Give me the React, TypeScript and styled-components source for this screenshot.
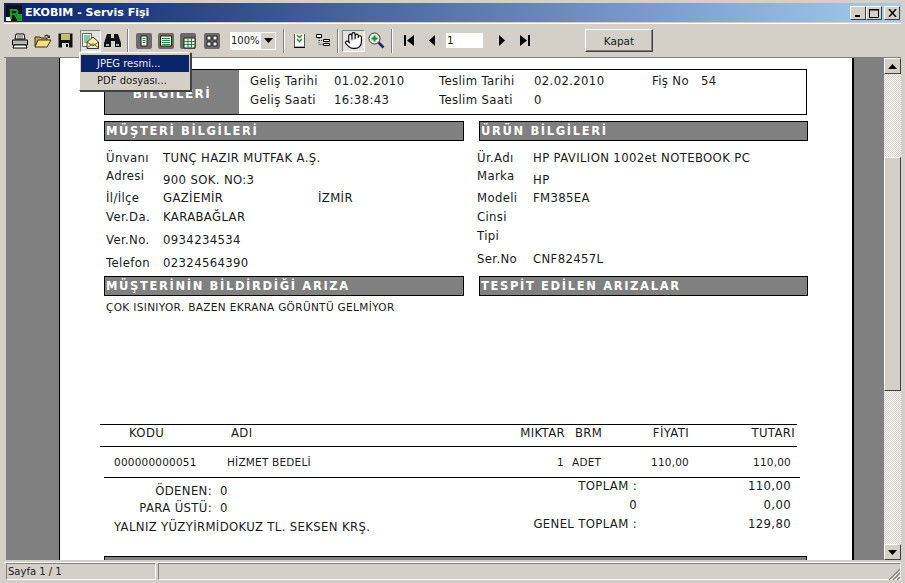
import styled, { createGlobalStyle } from "styled-components";
import { Hand } from "lucide-react";

const Global = createGlobalStyle`
  html, body {
    margin: 0;
    padding: 0;
    overflow: hidden;
  }
  body {
    font-family: "DejaVu Sans", "Liberation Sans", sans-serif;
    color: #1a1a1a;
  }
`;

const Window = styled.div`
  width: 905px;
  height: 583px;
  box-sizing: border-box;
  padding: 3px 4px 2px 4px;
  background: #d4d0c8;
  display: flex;
  flex-direction: column;
  position: relative;
  overflow: hidden;
`;

const TitleBar = styled.div`
  height: 19px;
  flex: none;
  display: flex;
  align-items: center;
  background: linear-gradient(90deg, #0a246a 0%, #a6caf0 100%);
  padding: 0 1px 0 2px;
  color: #fff;
  font-size: 11px;
  font-weight: bold;
`;

const TitleText = styled.span`
  margin-left: 3px;
  flex: 1;
`;

const CaptionButton = styled.button<{ $gap?: number }>`
  width: 16px;
  height: 14px;
  padding: 0;
  margin-left: ${(p) => p.$gap ?? 0}px;
  background: #d4d0c8;
  border: 1px solid;
  border-color: #fff #404040 #404040 #fff;
  display: flex;
  align-items: center;
  justify-content: center;
`;

const Toolbar = styled.div`
  height: 33px;
  flex: none;
  margin-top: 1px;
  padding-left: 4px;
  display: flex;
  align-items: center;
  border-top: 1px solid #fff;
  border-bottom: 1px solid #808080;
`;

const ToolButton = styled.div<{ $w?: number; $ml?: number; $pressed?: boolean }>`
  width: ${(p) => p.$w ?? 23}px;
  height: 22px;
  flex: none;
  margin-left: ${(p) => p.$ml ?? 0}px;
  display: flex;
  align-items: center;
  justify-content: center;
  box-sizing: border-box;
  ${(p) =>
    p.$pressed &&
    `border: 1px solid; border-color: #808080 #fff #fff #808080; background: #e4e2dc;`}
`;

const Separator = styled.div<{ $ml: number }>`
  width: 2px;
  height: 24px;
  flex: none;
  margin-left: ${(p) => p.$ml}px;
  background: linear-gradient(90deg, #808080 50%, #fff 50%);
`;

const ZoomCombo = styled.div`
  width: 46px;
  height: 18px;
  flex: none;
  margin-left: 7px;
  background: #fff;
  display: flex;
  align-items: center;
  justify-content: space-between;
  font-size: 10px;
  padding-left: 1px;
  box-sizing: border-box;
`;

const ComboArrow = styled.div`
  width: 14px;
  height: 16px;
  margin-right: 1px;
  background: #d4d0c8;
  display: flex;
  align-items: center;
  justify-content: center;
`;

const PageInput = styled.div`
  width: 37px;
  height: 15px;
  flex: none;
  margin-left: 3px;
  background: #fff;
  font-size: 10.5px;
  line-height: 15px;
  padding-left: 1px;
  box-sizing: border-box;
`;

const CloseButton = styled.div`
  width: 68px;
  height: 23px;
  flex: none;
  margin-left: 49px;
  box-sizing: border-box;
  border: 1px solid;
  border-color: #fff #404040 #404040 #fff;
  box-shadow: inset -1px -1px 0 #808080;
  font-size: 10.5px;
  display: flex;
  align-items: center;
  justify-content: center;
`;

const Menu = styled.div`
  position: absolute;
  left: 79px;
  top: 52px;
  width: 112px;
  height: 39px;
  box-sizing: border-box;
  padding: 2px 1px;
  background: #d4d0c8;
  border: 1px solid;
  border-color: #fff #404040 #404040 #fff;
  box-shadow: 1px 1px 0 #404040;
  z-index: 5;
`;

const MenuItem = styled.div<{ $active?: boolean }>`
  height: 17px;
  padding-left: 16px;
  font-size: 10px;
  line-height: 17px;
  color: ${(p) => (p.$active ? "#e8e8f4" : "#1a1a1a")};
  background: ${(p) => (p.$active ? "#0a246a" : "transparent")};
`;

const Viewer = styled.div`
  flex: 1;
  min-height: 0;
  display: flex;
  margin-left: 2px;
`;

const Desk = styled.div`
  flex: 1;
  background: #808080;
  padding-left: 53px;
  overflow: hidden;
`;

const Page = styled.div`
  width: 795px;
  height: 700px;
  box-sizing: border-box;
  background: #fff;
  border-left: 1px solid #000;
  border-right: 2px solid #000;
  padding-top: 11px;
  font-size: 11.7px;
  letter-spacing: 0.35px;
`;

const HeaderBox = styled.div`
  width: 703px;
  height: 46px;
  margin-left: 44px;
  box-sizing: border-box;
  border: 1px solid #000;
  display: flex;
`;

const HeaderTitle = styled.div`
  width: 134px;
  flex: none;
  background: #808080;
  color: #fff;
  font-weight: bold;
  font-size: 12px;
  letter-spacing: 1.5px;
  display: flex;
  align-items: flex-end;
  justify-content: center;
  padding-bottom: 13px;
  box-sizing: border-box;
`;

const HeaderGrid = styled.div`
  flex: 1;
  display: grid;
  grid-template-columns: 84px 105px 95px 118px 49px 1fr;
  grid-auto-rows: 19px;
  padding: 2px 0 0 11px;
  line-height: 19px;
`;

const Columns = styled.div`
  display: grid;
  grid-template-columns: 360px 329px;
  column-gap: 15px;
  margin: 6px 0 0 44px;
`;

const SectionBar = styled.div`
  height: 20px;
  box-sizing: border-box;
  background: #808080;
  border: 1px solid #000;
  color: #fff;
  font-weight: bold;
  font-size: 11.5px;
  letter-spacing: 1.65px;
  line-height: 18px;
  padding-left: 1px;
  white-space: nowrap;
`;

const Fields = styled.div<{ $left: number }>`
  padding-top: 8px;
  margin-left: ${(p) => p.$left}px;
`;

const FieldRow = styled.div<{ $h: number; $labelW: number }>`
  height: ${(p) => p.$h}px;
  display: grid;
  grid-template-columns: ${(p) => p.$labelW}px 155px 1fr;
  line-height: 18px;
  white-space: nowrap;
`;

const FieldValue = styled.span<{ $drop?: number }>`
  padding-top: ${(p) => p.$drop ?? 0}px;
`;

const FaultText = styled.div`
  height: 128px;
  box-sizing: border-box;
  padding: 4px 0 0 2px;
  font-size: 10.5px;
  letter-spacing: 0.35px;
  line-height: 14px;
  white-space: nowrap;
`;

const TableHead = styled.div`
  width: 697px;
  height: 23px;
  margin-left: 40px;
  box-sizing: border-box;
  border-top: 1px solid #000;
  border-bottom: 1px solid #000;
  padding-left: 29px;
  display: grid;
  grid-template-columns: 102px 274px 60px 10px 55px 59px 106px;
  line-height: 17px;
`;

const TableRow = styled.div`
  width: 696px;
  height: 31px;
  margin-left: 44px;
  box-sizing: border-box;
  border-bottom: 1px solid #000;
  padding-left: 10px;
  display: grid;
  grid-template-columns: 113px 330px 6px 9px 60px 57px 102px;
  font-size: 10.5px;
  letter-spacing: 0.2px;
  line-height: 30px;
`;

const RightCell = styled.span`
  text-align: right;
`;

const Summary = styled.div`
  display: grid;
  grid-template-columns: 323px 200px 154px;
  margin-left: 54px;
  height: 79px;
`;

const PaidBlock = styled.div`
  padding-top: 4px;
`;

const PaidRow = styled.div<{ $h: number }>`
  height: ${(p) => p.$h}px;
  display: grid;
  grid-template-columns: 98px 1fr;
  column-gap: 8px;
  line-height: 18px;
  white-space: nowrap;
`;

const AmountInWords = styled.div`
  line-height: 18px;
  white-space: nowrap;
`;

const Totals = styled.div`
  display: grid;
  grid-auto-rows: 19px;
  line-height: 17px;
  text-align: right;
`;

const FooterBar = styled.div`
  width: 703px;
  height: 30px;
  margin: -1px 0 0 44px;
  box-sizing: border-box;
  background: #808080;
  border: 1px solid #000;
`;

const ScrollBar = styled.div`
  width: 17px;
  flex: none;
  display: flex;
  flex-direction: column;
  background-color: #f1efe9;
  background-image: repeating-conic-gradient(#fff 0 25%, #d4d0c8 0 50%);
  background-size: 2px 2px;
`;

const ScrollArrow = styled.div`
  height: 16px;
  flex: none;
  box-sizing: border-box;
  background: #d4d0c8;
  border: 1px solid;
  border-color: #fff #404040 #404040 #fff;
  display: flex;
  align-items: center;
  justify-content: center;
`;

const ScrollTrack = styled.div`
  flex: 1;
  padding-top: 83px;
`;

const ScrollThumb = styled.div`
  height: 234px;
  box-sizing: border-box;
  background: #d4d0c8;
  border: 1px solid;
  border-color: #fff #404040 #404040 #fff;
`;

const StatusBar = styled.div`
  height: 18px;
  flex: none;
  margin-top: 2px;
  border-top: 1px solid #fff;
  display: flex;
  gap: 2px;
  padding-left: 2px;
  font-size: 10px;
  line-height: 16px;
  position: relative;
`;

const StatusPanel = styled.div<{ $w?: number }>`
  ${(p) => (p.$w ? `width: ${p.$w}px;` : "flex: 1;")}
  box-sizing: border-box;
  height: 17px;
  border: 1px solid;
  border-color: #808080 #fff #fff #808080;
  padding-left: 1px;
`;

const Grip = styled.svg`
  position: absolute;
  right: 0;
  bottom: 0;
`;

const Tri = ({ d }: { d: "up" | "down" }) => (
  <svg width="9" height="5" viewBox="0 0 9 5">
    <path d={d === "up" ? "M4.5 0 9 5H0z" : "M0 0h9L4.5 5z"} fill="#000" />
  </svg>
);

const Printer = () => (
  <svg width="18" height="16" viewBox="0 0 18 16">
    <path d="M5 1h8l1 5H4z" fill="#fff" stroke="#000" />
    <path d="M1.5 7h15v5h-15z" fill="#b8b8b0" stroke="#000" />
    <path d="M3 12h12l1 3H2z" fill="#fff" stroke="#000" />
    <path d="M6 3h6M6 5h6" stroke="#555" />
  </svg>
);

const Folder = () => (
  <svg width="18" height="16" viewBox="0 0 18 16">
    <path d="M1 4h5l1 1h6v8H1z" fill="#c0a840" stroke="#403000" />
    <path d="M1 14l3-7h13l-4 7z" fill="#f0e090" stroke="#403000" />
    <path d="M10 3q3-3 5 0l1-1v3h-3l1-1q-2-2-3 0" fill="#333" />
  </svg>
);

const Floppy = () => (
  <svg width="15" height="15" viewBox="0 0 15 15">
    <path d="M.5.5h14v14H.5z" fill="#111" />
    <path d="M3 1h9v6H3z" fill="#c8c060" />
    <path d="M4 10h7v5H4z" fill="#d8d8d0" />
    <path d="M8 11h2v3H8z" fill="#111" />
  </svg>
);

const ExportIcon = () => (
  <svg width="17" height="17" viewBox="0 0 17 17">
    <path d="M.5 1.5h9v13h-9z" fill="#fff" stroke="#666" />
    <path d="M2 4h6M2 6h6M2 8h5M2 10h5" stroke="#1a8a3a" />
    <path d="M5 10l6-5 5.500 5v6.500H5z" fill="#fff0a0" stroke="#333" />
    <path d="M5 16l5-4h2l4.500 4M5 10l6 4 5.500-4" fill="none" stroke="#555" />
  </svg>
);

const Binoculars = () => (
  <svg width="17" height="15" viewBox="0 0 17 15">
    <path d="M3 1h4v4h3V1h4l3 9v4h-6V8H7v6H0v-4z" fill="#111" />
    <path d="M2 11h3v2H2zM12 11h3v2h-3z" fill="#aaa" />
  </svg>
);

const LayoutIcon = ({ kind }: { kind: number }) => (
  <svg width="16" height="16" viewBox="0 0 16 16">
    <rect width="16" height="16" rx="2" fill="#6a6a6a" />
    {kind === 0 && (
      <>
        <path d="M5 3h6v10H5z" fill="#eef8e8" stroke="#222" />
        <path d="M6.500 5.500h3M6.500 7.500h3M6.500 9.500h3" stroke="#2a8a40" />
      </>
    )}
    {kind === 1 && (
      <>
        <path d="M2.500 3h11v10h-11z" fill="#eef8e8" stroke="#222" />
        <path d="M4 5.500h8M4 7.500h8M4 9.500h8M4 11.500h8" stroke="#2a8a40" />
      </>
    )}
    {kind === 2 && (
      <>
        <path d="M4 5h11v10H4z" fill="#eef8e8" stroke="#222" />
        <path d="M4 8.500h11M4 11.500h11M8 5v10M11.500 5v10" stroke="#1a8a3a" />
      </>
    )}
    {kind === 3 && (
      <path d="M3 3h4v4H3zM9 3h4v4H9zM3 9h4v4H3zM9 9h4v4H9z" fill="#eee" stroke="#222" />
    )}
  </svg>
);

const CheckDoc = () => (
  <svg width="13" height="15" viewBox="0 0 13 15">
    <path d="M1.500 1v13h10V1" fill="#fff" stroke="#555" />
    <path d="M1 14.500h11" stroke="#000" />
    <path d="M4 2l2.500 2.500L9 2M4 6l2.500 2.500L9 6" fill="none" stroke="#2a8a20" strokeWidth="1.400" />
  </svg>
);

const TreeIcon = () => (
  <svg width="14" height="13" viewBox="0 0 14 13">
    <path d="M.5.5h5v3h-5zM7.500 5.500h6v2h-6zM7.500 9.500h6v2h-6z" fill="#fff" stroke="#000" />
    <path d="M3 4v6.500h4M3 6.500h4" stroke="#333" strokeDasharray="1 1" fill="none" />
  </svg>
);

const ZoomIn = () => (
  <svg width="17" height="17" viewBox="0 0 17 17">
    <circle cx="6.500" cy="6.500" r="5.500" fill="#e8f4e8" stroke="#333" />
    <path d="M3.500 6.500h6M6.500 3.500v6" stroke="#109020" strokeWidth="2" />
    <path d="M10.500 10.500l5 5" stroke="#20207a" strokeWidth="2.500" />
  </svg>
);

const NavIcon = ({ d }: { d: string }) => (
  <svg width="10" height="11" viewBox="0 0 10 11">
    <path d={d} fill="#000" />
  </svg>
);

const Logo = () => (
  <svg width="16" height="16" viewBox="0 0 16 16">
    <rect width="16" height="16" fill="#111" />
    <path d="M0 12h5v4H0z" fill="#fff" />
    <path d="M11 9h5v7h-5z" fill="#1a9a3a" />
    <text x="3" y="14" fontFamily="Liberation Sans" fontWeight="bold" fontSize="14" fill="#1a9a3a">
      R
    </text>
  </svg>
);

const leftFields = [
  { h: 18, label: "Ünvanı", value: "TUNÇ HAZIR MUTFAK A.Ş." },
  { h: 22, label: "Adresi", value: "900 SOK. NO:3", drop: 4 },
  { h: 19, label: "İl/İlçe", value: "GAZİEMİR", extra: "İZMİR" },
  { h: 23, label: "Ver.Da.", value: "KARABAĞLAR" },
  { h: 23, label: "Ver.No.", value: "0934234534" },
  { h: 22, label: "Telefon", value: "02324564390" },
];

const rightFields = [
  { h: 18, label: "Ür.Adı", value: "HP PAVILION 1002et NOTEBOOK PC" },
  { h: 22, label: "Marka", value: "HP", drop: 4 },
  { h: 19, label: "Modeli", value: "FM385EA" },
  { h: 19, label: "Cinsi", value: "" },
  { h: 23, label: "Tipi", value: "" },
  { h: 26, label: "Ser.No", value: "CNF82457L" },
];

export default function App() {
  return (
    <Window>
      <Global />
      <TitleBar>
        <Logo />
        <TitleText>EKOBIM - Servis Fişi</TitleText>
        <CaptionButton>
          <svg width="8" height="8" viewBox="0 0 8 8">
            <path d="M1 6h5v2H1z" fill="#000" />
          </svg>
        </CaptionButton>
        <CaptionButton>
          <svg width="10" height="10" viewBox="0 0 10 10">
            <path d="M.5 1.500h9v8h-9z" fill="none" stroke="#000" />
            <path d="M0 1h10v1.500H0z" fill="#000" />
          </svg>
        </CaptionButton>
        <CaptionButton $gap={2}>
          <svg width="9" height="8" viewBox="0 0 9 8">
            <path d="M1 0l7 8M8 0L1 8" stroke="#000" strokeWidth="1.500" />
          </svg>
        </CaptionButton>
      </TitleBar>

      <Toolbar>
        <ToolButton><Printer /></ToolButton>
        <ToolButton><Folder /></ToolButton>
        <ToolButton><Floppy /></ToolButton>
        <ToolButton $w={21} $ml={3} $pressed><ExportIcon /></ToolButton>
        <ToolButton><Binoculars /></ToolButton>
        <Separator $ml={3} />
        <ToolButton $w={22} $ml={4}><LayoutIcon kind={0} /></ToolButton>
        <ToolButton $w={22}><LayoutIcon kind={1} /></ToolButton>
        <ToolButton $w={22}><LayoutIcon kind={2} /></ToolButton>
        <ToolButton $ml={1}><LayoutIcon kind={3} /></ToolButton>
        <ZoomCombo>
          100%
          <ComboArrow><Tri d="down" /></ComboArrow>
        </ZoomCombo>
        <Separator $ml={7} />
        <ToolButton $ml={3}><CheckDoc /></ToolButton>
        <ToolButton><TreeIcon /></ToolButton>
        <Separator $ml={3} />
        <ToolButton $ml={3} $pressed>
          <Hand size={19} strokeWidth={1.4} color="#000" fill="#fff" />
        </ToolButton>
        <ToolButton><ZoomIn /></ToolButton>
        <Separator $ml={3} />
        <ToolButton $ml={4}><NavIcon d="M0 0h2v11H0zM10 0v11L3 5.500z" /></ToolButton>
        <ToolButton><NavIcon d="M8 0v11L2 5.500z" /></ToolButton>
        <PageInput>1</PageInput>
        <ToolButton $ml={7}><NavIcon d="M2 0v11l6-5.500z" /></ToolButton>
        <ToolButton><NavIcon d="M0 0v11l7-5.500zM8 0h2v11H8z" /></ToolButton>
        <CloseButton>Kapat</CloseButton>
      </Toolbar>

      <Menu>
        <MenuItem $active>JPEG resmi...</MenuItem>
        <MenuItem>PDF dosyası...</MenuItem>
      </Menu>

      <Viewer>
        <Desk>
          <Page>
            <HeaderBox>
              <HeaderTitle>BİLGİLERİ</HeaderTitle>
              <HeaderGrid>
                <span>Geliş Tarihi</span>
                <span>01.02.2010</span>
                <span>Teslim Tarihi</span>
                <span>02.02.2010</span>
                <span>Fiş No</span>
                <span>54</span>
                <span>Geliş Saati</span>
                <span>16:38:43</span>
                <span>Teslim Saati</span>
                <span>0</span>
              </HeaderGrid>
            </HeaderBox>

            <Columns>
              <div>
                <SectionBar>MÜŞTERİ BİLGİLERİ</SectionBar>
                <Fields $left={2}>
                  {leftFields.map((f) => (
                    <FieldRow key={f.label} $h={f.h} $labelW={57}>
                      <span>{f.label}</span>
                      <FieldValue $drop={f.drop}>{f.value}</FieldValue>
                      {f.extra && <span>{f.extra}</span>}
                    </FieldRow>
                  ))}
                </Fields>
              </div>
              <div>
                <SectionBar>ÜRÜN BİLGİLERİ</SectionBar>
                <Fields $left={-2}>
                  {rightFields.map((f) => (
                    <FieldRow key={f.label} $h={f.h} $labelW={56}>
                      <span>{f.label}</span>
                      <FieldValue $drop={f.drop}>{f.value}</FieldValue>
                    </FieldRow>
                  ))}
                </Fields>
              </div>
              <SectionBar>MÜŞTERİNİN BİLDİRDİĞİ ARIZA</SectionBar>
              <SectionBar>TESPİT EDİLEN ARIZALAR</SectionBar>
              <FaultText>ÇOK ISINIYOR. BAZEN EKRANA GÖRÜNTÜ GELMİYOR</FaultText>
              <div />
            </Columns>

            <TableHead>
              <span>KODU</span>
              <span>ADI</span>
              <RightCell>MIKTAR</RightCell>
              <span />
              <span>BRM</span>
              <RightCell>FİYATI</RightCell>
              <RightCell>TUTARI</RightCell>
            </TableHead>
            <TableRow>
              <span>000000000051</span>
              <span>HİZMET BEDELİ</span>
              <RightCell>1</RightCell>
              <span />
              <span>ADET</span>
              <RightCell>110,00</RightCell>
              <RightCell>110,00</RightCell>
            </TableRow>

            <Summary>
              <PaidBlock>
                <PaidRow $h={17}>
                  <RightCell>ÖDENEN:</RightCell>
                  <span>0</span>
                </PaidRow>
                <PaidRow $h={19}>
                  <RightCell>PARA ÜSTÜ:</RightCell>
                  <span>0</span>
                </PaidRow>
                <AmountInWords>YALNIZ YÜZYİRMİDOKUZ TL. SEKSEN KRŞ.</AmountInWords>
              </PaidBlock>
              <Totals>
                <span>TOPLAM :</span>
                <span>0</span>
                <span>GENEL TOPLAM :</span>
              </Totals>
              <Totals>
                <span>110,00</span>
                <span>0,00</span>
                <span>129,80</span>
              </Totals>
            </Summary>
            <FooterBar />
          </Page>
        </Desk>
        <ScrollBar>
          <ScrollArrow><Tri d="up" /></ScrollArrow>
          <ScrollTrack>
            <ScrollThumb />
          </ScrollTrack>
          <ScrollArrow><Tri d="down" /></ScrollArrow>
        </ScrollBar>
      </Viewer>

      <StatusBar>
        <StatusPanel $w={150}>Sayfa 1 / 1</StatusPanel>
        <StatusPanel />
        <Grip width="13" height="13" viewBox="0 0 13 13">
          <path d="M12 1L1 12M12 5L5 12M12 9L9 12" stroke="#808080" strokeWidth="1.200" />
          <path d="M12 3L3 12M12 7L7 12M12 11l-1 1" stroke="#fff" />
        </Grip>
      </StatusBar>
    </Window>
  );
}
